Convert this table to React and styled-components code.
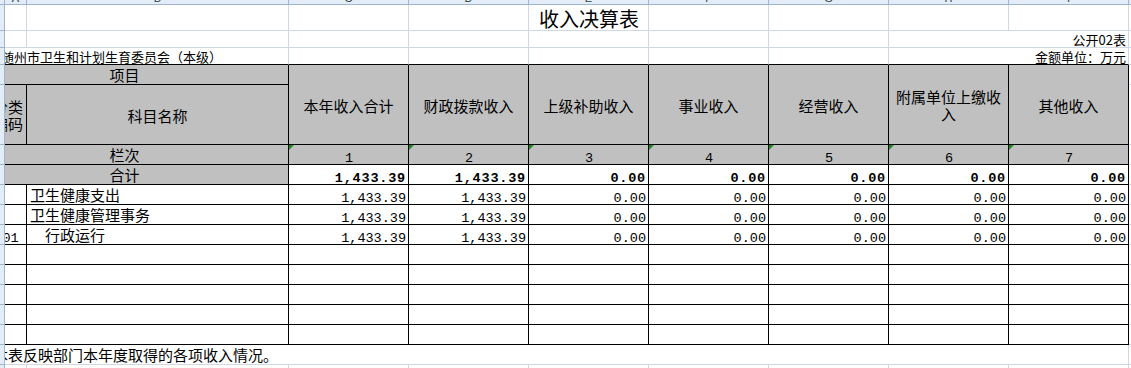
import React from 'react';
import styled, { createGlobalStyle } from 'styled-components';

const GlobalStyle = createGlobalStyle`
  html, body {
    margin: 0;
    padding: 0;
    background: #fff;
  }
  body {
    font-family: "Noto Sans CJK SC", "Noto Sans", sans-serif;
    color: #000;
  }
`;

const GRID = '#d0d7e5';
const LINE = '#000';
const HEAD_BG = '#c0c0c0';
const FRAME = '#9eb6ce';
const FRAME_BG = '#e4ecf7';
const MONO = '"Liberation Mono", "DejaVu Sans Mono", monospace';

// sheet columns A..J, rows 1..17 (px, border included)
const COL_WIDTHS = [67, 262, 120, 120, 120, 120, 120, 120, 120, 60];
const ROW_HEIGHTS = [26, 17, 17, 20, 60, 20, 20, 20, 20, 20, 20, 20, 20, 20, 20, 20, 20];
const SCROLL_X = 45; // sheet is scrolled so most of column A is out of view
const LETTERS = ['A', 'B', 'C', 'D', 'E', 'F', 'G', 'H', 'I', 'J'];

const HEADS = ['本年收入合计', '财政拨款收入', '上级补助收入', '事业收入', '经营收入', '附属单位上缴收入', '其他收入'];

const TOTAL = [1433.39, 1433.39, 0, 0, 0, 0, 0];

const LINES = [
  { code: '210', name: '卫生健康支出', level: 0, values: [1433.39, 1433.39, 0, 0, 0, 0, 0] },
  { code: '21001', name: '卫生健康管理事务', level: 0, values: [1433.39, 1433.39, 0, 0, 0, 0, 0] },
  { code: '2100101', name: '行政运行', level: 1, values: [1433.39, 1433.39, 0, 0, 0, 0, 0] }
];

const BLANK_ROWS = 5;

const fmt = (n) => n.toLocaleString('en-US', { minimumFractionDigits: 2, maximumFractionDigits: 2 });

const ALIGN = { left: 'flex-start', center: 'center', right: 'flex-end' };

const App = () => {
  return (
    <>
      <GlobalStyle />
      <Window>
        <Corner />
        <ColumnBar>
          {LETTERS.map((letter, i) => (
            <ColumnHead key={letter} $w={i === 0 ? COL_WIDTHS[0] - SCROLL_X : COL_WIDTHS[i]}>
              {letter}
            </ColumnHead>
          ))}
        </ColumnBar>
        <RowBar>
          {ROW_HEIGHTS.map((h, i) => (
            <RowHead key={i} $h={h} />
          ))}
        </RowBar>
        <Viewport>
          <Sheet>
            {/* row 1 */}
            <Cell />
            <Cell />
            <Cell />
            <Cell />
            <Title $align="center">收入决算表</Title>
            <Cell />
            <Cell />
            <Cell />
            <Cell />
            <Cell />

            {/* row 2 */}
            {Array.from({ length: 7 }, (_, i) => <Cell key={i} />)}
            <Caption $span={2} $align="right">公开02表</Caption>
            <Cell />

            {/* row 3 */}
            <Caption $span={2} $b $indent={38}>随州市卫生和计划生育委员会（本级）</Caption>
            {Array.from({ length: 5 }, (_, i) => <Cell key={i} $b />)}
            <Caption $span={2} $b $align="right">金额单位：万元</Caption>
            <Cell />

            {/* header */}
            <Label $span={2} $r $b $fill $align="center">项目</Label>
            {HEADS.map((head) => (
              <HeadCell key={head} $rows={2} $r $b $fill>{head}</HeadCell>
            ))}
            <Cell />
            <HeadCell $r $b $fill $nowrap>功能分类<br />科目编码</HeadCell>
            <HeadCell $r $b $fill>科目名称</HeadCell>
            <Cell />

            {/* column index */}
            <Label $span={2} $r $b $fill $align="center">栏次</Label>
            {HEADS.map((head, i) => (
              <IndexCell key={head} $r $b $fill $align="center">{i + 1}</IndexCell>
            ))}
            <Cell />

            {/* total */}
            <Label $span={2} $r $b $fill $align="center">合计</Label>
            {TOTAL.map((v, i) => (
              <NumCell key={i} $r $b $bold $align="right">{fmt(v)}</NumCell>
            ))}
            <Cell />

            {LINES.map((line) => (
              <React.Fragment key={line.code}>
                <CodeCell $r $b>{line.code}</CodeCell>
                <Label $r $b $indent={line.level * 15}>{line.name}</Label>
                {line.values.map((v, i) => (
                  <NumCell key={i} $r $b $align="right">{fmt(v)}</NumCell>
                ))}
                <Cell />
              </React.Fragment>
            ))}

            {Array.from({ length: BLANK_ROWS }, (_, r) => (
              <React.Fragment key={r}>
                {Array.from({ length: 9 }, (_, c) => <Cell key={c} $r $b />)}
                <Cell />
              </React.Fragment>
            ))}

            {/* note */}
            <Label $span={9}>注：本表反映部门本年度取得的各项收入情况。</Label>
            <Cell />

            {Array.from({ length: 10 }, (_, i) => <Cell key={i} />)}
          </Sheet>
        </Viewport>
      </Window>
    </>
  );
};

export default App;

const Window = styled.div`
  width: 1131px;
  height: 368px;
  overflow: hidden;
  display: grid;
  grid-template-columns: 5px 1fr;
  grid-template-rows: 5px 1fr;
  background: #fff;
`;

const Corner = styled.div`
  box-sizing: border-box;
  background: ${FRAME_BG};
  border-right: 1px solid ${FRAME};
  border-bottom: 1px solid ${FRAME};
`;

const ColumnBar = styled.div`
  display: flex;
  overflow: hidden;
`;

const ColumnHead = styled.div`
  box-sizing: border-box;
  flex: 0 0 ${(p) => p.$w}px;
  height: 5px;
  display: flex;
  justify-content: center;
  align-items: flex-end;
  overflow: hidden;
  background: ${FRAME_BG};
  border-right: 1px solid ${FRAME};
  border-bottom: 1px solid ${FRAME};
  font-family: "Liberation Sans", Arial, sans-serif;
  font-size: 11px;
  line-height: 11px;
  color: #27413e;
`;

const RowBar = styled.div`
  display: flex;
  flex-direction: column;
  overflow: hidden;
`;

const RowHead = styled.div`
  box-sizing: border-box;
  flex: 0 0 ${(p) => p.$h}px;
  background: ${FRAME_BG};
  border-right: 1px solid ${FRAME};
  border-bottom: 1px solid ${FRAME};
`;

const Viewport = styled.div`
  overflow: hidden;
  min-width: 0;
  min-height: 0;
`;

const Sheet = styled.div`
  display: grid;
  width: max-content;
  margin-left: -${SCROLL_X}px;
  grid-template-columns: ${COL_WIDTHS.map((w) => `${w}px`).join(' ')};
  grid-template-rows: ${ROW_HEIGHTS.map((h) => `${h}px`).join(' ')};
`;

const Cell = styled.div`
  box-sizing: border-box;
  position: relative;
  grid-column: span ${(p) => p.$span || 1};
  grid-row: span ${(p) => p.$rows || 1};
  display: flex;
  align-items: flex-end;
  justify-content: ${(p) => ALIGN[p.$align || 'left']};
  min-width: 0;
  overflow: hidden;
  padding: 0 2px 0 ${(p) => 3 + (p.$indent || 0)}px;
  background: ${(p) => (p.$fill ? HEAD_BG : '#fff')};
  border-right: 1px solid ${(p) => (p.$r ? LINE : GRID)};
  border-bottom: 1px solid ${(p) => (p.$b ? LINE : GRID)};
  font-size: 15px;
  line-height: 19px;
  white-space: nowrap;
`;

const Label = styled(Cell)``;

const Title = styled(Cell)`
  font-size: 20px;
  line-height: 22px;
`;

const Caption = styled(Cell)`
  font-size: 13px;
  line-height: 14px;
`;

const HeadCell = styled(Cell)`
  align-items: center;
  justify-content: center;
  padding: 1px 4px 0;
  text-align: center;
  line-height: 17px;
  white-space: ${(p) => (p.$nowrap ? 'nowrap' : 'normal')};
`;

const NumCell = styled(Cell)`
  font-family: ${MONO};
  font-size: 13.5px;
  line-height: 11px;
  font-weight: ${(p) => (p.$bold ? 700 : 400)};
  letter-spacing: ${(p) => (p.$bold ? '0.8px' : '0')};
`;

const CodeCell = styled(NumCell)`
  padding-left: 2px;
`;

const IndexCell = styled(NumCell)`
  &::before {
    content: '';
    position: absolute;
    top: 0;
    left: 0;
    border-top: 5px solid #1d8a1d;
    border-right: 5px solid transparent;
  }
`;
